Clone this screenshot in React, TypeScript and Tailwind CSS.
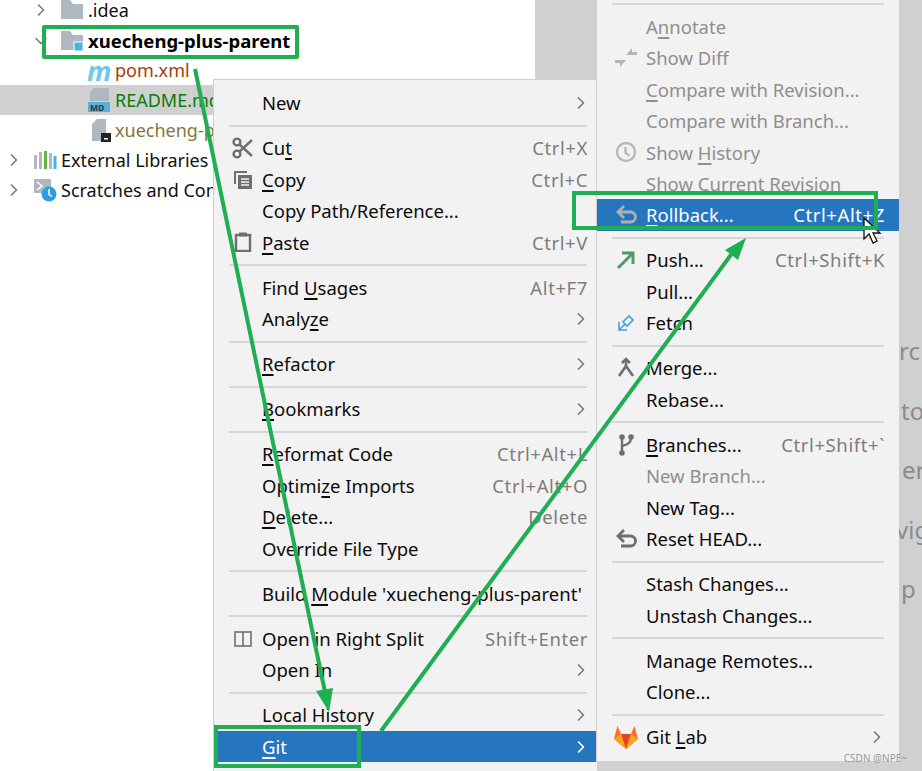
import { ChevronRight, ChevronDown } from 'lucide-react'
import type { ReactNode } from 'react'

const font = { fontFamily: '"Noto Sans", sans-serif' }

function U({ children }: { children: ReactNode }) {
  return <span className="underline decoration-2 underline-offset-[3px]">{children}</span>
}

function Sep({ sub }: { sub?: boolean }) {
  return (
    <div className={`h-[13.75px] flex items-center pl-[15px] ${sub ? 'pr-[15px]' : 'pr-[10px]'}`}>
      <div className="h-[2px] w-full bg-[#d6d6d6]" />
    </div>
  )
}

interface ItemProps {
  label: ReactNode
  icon?: ReactNode
  shortcut?: string
  arrow?: boolean
  disabled?: boolean
  active?: boolean
  sub?: boolean
}

function Item({ label, icon, shortcut, arrow, disabled, active, sub }: ItemProps) {
  const color = active ? 'text-white' : disabled ? 'text-[#8f8f8f]' : 'text-[#0c0c0c]'
  return (
    <div className={`h-[31.4px] flex items-center whitespace-nowrap ${active ? 'bg-[#2675bf]' : ''} ${color}`}>
      <div className={`shrink-0 pl-[9px] flex items-center justify-center ${sub ? 'w-[49px]' : 'w-[48px]'}`}>{icon}</div>
      <div>{label}</div>
      <div className="flex-1" />
      {shortcut && (
        <div className={`tracking-[0.6px] ${sub ? 'pr-[14px]' : 'pr-[9px]'} ${active ? 'text-white' : 'text-[#7d7d7d]'}`}>
          {shortcut}
        </div>
      )}
      {arrow && (
        <ChevronRight
          size={20}
          strokeWidth={2}
          className={`${sub ? 'mr-[12px]' : 'mr-[6px]'} ${active ? 'text-white' : 'text-[#7b7b7b]'}`}
        />
      )}
    </div>
  )
}

function FolderIcon({ badge }: { badge?: boolean }) {
  return (
    <svg width="24" height="24" viewBox="0 0 24 24">
      <path d="M1 2h9l3 4h10v15H1z" fill="#afb8bf" />
      {badge && <rect x="14" y="13" width="9" height="9" fill="#40b6e0" stroke="#fff" strokeWidth="1" />}
    </svg>
  )
}

function ScissorsIcon() {
  return (
    <svg width="22" height="22" viewBox="0 0 22 22" fill="none" stroke="#6e6e6e" strokeWidth="2.4">
      <circle cx="5" cy="5" r="3.4" />
      <circle cx="5" cy="17" r="3.4" />
      <path d="M7.5 7.5L20 19M7.5 14.5L20 3" />
    </svg>
  )
}

function CopyIcon() {
  return (
    <svg width="20" height="20" viewBox="0 0 20 20">
      <path d="M1 1h13v2H3v11H1z" fill="#6e6e6e" />
      <rect x="5" y="5" width="14" height="14" fill="#6e6e6e" />
      <path d="M8 9h8M8 12h8M8 15h8" stroke="#f2f2f2" strokeWidth="1.3" />
    </svg>
  )
}

function PasteIcon() {
  return (
    <svg width="18" height="20" viewBox="0 0 18 20" fill="none">
      <rect x="2" y="3" width="14" height="16" stroke="#6e6e6e" strokeWidth="2.4" />
      <rect x="5" y="0.5" width="8" height="4" fill="#6e6e6e" />
    </svg>
  )
}

function SplitIcon() {
  return (
    <svg width="18" height="18" viewBox="0 0 18 18" fill="none" stroke="#6e6e6e" strokeWidth="1.6">
      <rect x="1" y="2" width="16" height="14" />
      <path d="M9 2v14" />
    </svg>
  )
}

function DiffIcon() {
  return (
    <svg width="22" height="22" viewBox="0 0 22 22" fill="#b5b5b5">
      <path d="M11 8L17 1v4h5v3z" />
      <path d="M11 13L5 20v-4H0v-3z" />
    </svg>
  )
}

function ClockIcon() {
  return (
    <svg width="22" height="22" viewBox="0 0 22 22" fill="none" stroke="#b8b8b8" strokeWidth="2.4">
      <circle cx="11" cy="11" r="9" />
      <path d="M10.5 6v6l4 2.5" />
    </svg>
  )
}

function UndoIcon({ color }: { color: string }) {
  return (
    <svg width="21" height="20" viewBox="0 0 21 20" fill="none" stroke={color} strokeWidth="2.800">
      <path d="M2 7h12.500a5 5 0 0 1 0 10H5" />
      <path d="M8 1L2 7l6 6" />
    </svg>
  )
}

function PushIcon() {
  return (
    <svg width="20" height="20" viewBox="0 0 20 20" fill="none" stroke="#4e9a6a" strokeWidth="3">
      <path d="M2 18L16 4" />
      <path d="M6 3h11v11" />
    </svg>
  )
}

function FetchIcon() {
  return (
    <svg width="18" height="18" viewBox="0 0 18 18" fill="none" stroke="#3f9fe0" strokeWidth="1.6">
      <path d="M2 8v8h8" />
      <path d="M2.5 15.5L8 10l-2-2 6-6 4 4-6 6-2-2" />
    </svg>
  )
}

function MergeIcon() {
  return (
    <svg width="18" height="22" viewBox="0 0 18 22" fill="none" stroke="#6e6e6e" strokeWidth="2.600">
      <path d="M9 3v6L2 19" />
      <path d="M9 9l7 10" />
      <path d="M5 6l4-4 4 4" />
    </svg>
  )
}

function BranchIcon() {
  return (
    <svg width="16" height="22" viewBox="0 0 16 22" fill="none" stroke="#6e6e6e" strokeWidth="2.400">
      <path d="M4 3v16" />
      <path d="M13 4c0 5-3 6-9 8" />
      <circle cx="4" cy="3" r="1.600" fill="#6e6e6e" />
      <circle cx="4" cy="19" r="1.600" fill="#6e6e6e" />
      <circle cx="13" cy="3" r="1.600" fill="#6e6e6e" />
    </svg>
  )
}

function GitLabIcon() {
  return (
    <svg width="26" height="24" viewBox="0 0 26 24">
      <path d="M1 14L4.500 1 8 9h10l3.500-8L25 14l-12 10z" fill="#fc6d26" />
      <path d="M13 24L8 9h10z" fill="#e24329" />
      <path d="M1 14l12 10L8 9zM25 14L13 24l5-15z" fill="#fca326" />
    </svg>
  )
}

export default function App() {
  return (
    <div className="relative w-[922px] h-[771px] overflow-hidden bg-white text-[18.5px]" style={font}>
      {/* project tree */}
      <div className="-mt-[5px] w-[535px] text-[#111] text-[18px]">
        <div className="h-[30px] flex items-center pl-[31px]">
          <ChevronRight size={20} className="text-[#7b7b7b]" />
          <div className="ml-[9px] w-[28px]"><FolderIcon /></div>
          <span>.idea</span>
        </div>
        <div className="h-[30px] flex items-center pl-[31px] mt-[1px]">
          <ChevronDown size={20} className="text-[#7b7b7b]" />
          <div className="ml-[9px] w-[28px]"><FolderIcon badge /></div>
          <span className="font-bold text-black text-[18.5px]">xuecheng-plus-parent</span>
        </div>
        <div className="h-[30px] -mt-[1px] flex items-center pl-[87px]">
          <span className="w-[28px] text-[#6fc7ea] font-bold italic text-[27px] leading-none">m</span>
          <span className="text-[#a33e0c]">pom.xml</span>
        </div>
        <div className="h-[30px] flex items-center pl-[87px] bg-[#d0d0d0]">
          <svg width="24" height="26" viewBox="0 0 24 26" className="mr-[4px]">
            <path d="M7 1h15v13H3V5z" fill="#afb8bf" />
            <path d="M1 15h22v10H1z" fill="#5fb0d8" />
            <text x="3" y="23.500" fontSize="8.500" fontWeight="700" fill="#1d3a4a">MD</text>
          </svg>
          <span className="text-[#0a7a0a]">README.md</span>
        </div>
        <div className="h-[30px] flex items-center pl-[91px]">
          <svg width="20" height="24" viewBox="0 0 20 24" className="mr-[4px]">
            <path d="M6 1h9v16h-4v6H1V6z" fill="#afb8bf" />
            <rect x="10" y="15" width="10" height="9" fill="#222" />
            <rect x="13" y="20" width="4" height="1.500" fill="#fff" />
          </svg>
          <span className="text-[#82783c]">xuecheng-plus-parent.iml</span>
        </div>
        <div className="h-[30px] flex items-center pl-[4px]">
          <ChevronRight size={20} className="text-[#7b7b7b]" />
          <svg width="24" height="20" viewBox="0 0 24 20" className="ml-[9px] mr-[4px]">
            <rect x="1" y="5" width="3" height="14" fill="#afb8bf" />
            <rect x="6" y="2" width="3" height="17" fill="#afb8bf" />
            <rect x="11" y="1" width="3" height="18" fill="#62b543" />
            <rect x="16" y="3" width="3" height="16" fill="#afb8bf" />
            <rect x="20.500" y="6" width="3" height="13" fill="#40b6e0" />
          </svg>
          <span>External Libraries</span>
        </div>
        <div className="h-[30px] flex items-center pl-[4px]">
          <ChevronRight size={20} className="text-[#7b7b7b]" />
          <svg width="24" height="24" viewBox="0 0 24 24" className="ml-[9px] mr-[4px]">
            <rect x="1" y="1" width="17" height="14" fill="#afb8bf" />
            <path d="M4 4l5 4-5 4" fill="none" stroke="#fff" strokeWidth="1.600" />
            <circle cx="16" cy="16" r="7.500" fill="#2f9ee0" />
            <path d="M16 11v5.500l3 2" fill="none" stroke="#fff" strokeWidth="1.500" />
          </svg>
          <span>Scratches and Consoles</span>
        </div>
      </div>

      {/* dimmed window behind the popups */}
      <div className="absolute inset-y-0 left-[535px] right-0 bg-[#d0d0d0]" />
      <div className="absolute left-[888px] right-0 top-[321px] flex flex-col text-[24px] text-[#8b8b8b] leading-[59.500px] whitespace-nowrap">
        <div className="pl-[11px]">rc</div>
        <div className="pl-[13px]">to</div>
        <div className="pl-[14px]">er</div>
        <div className="pl-[8px]">vig</div>
        <div className="pl-[13px]">p</div>
      </div>

      {/* project context menu */}
      <div className="absolute left-[213px] top-[79px] bottom-0 w-[384px] bg-[#f2f2f2] border-l border-t border-[#d0d0d0] pt-[7.4px]">
        <Item label="New" arrow />
        <Sep />
        <Item icon={<ScissorsIcon />} label={<>Cu<U>t</U></>} shortcut="Ctrl+X" />
        <Item icon={<CopyIcon />} label={<><U>C</U>opy</>} shortcut="Ctrl+C" />
        <Item label="Copy Path/Reference..." />
        <Item icon={<PasteIcon />} label={<><U>P</U>aste</>} shortcut="Ctrl+V" />
        <Sep />
        <Item label={<>Find <U>U</U>sages</>} shortcut="Alt+F7" />
        <Item label={<>Analy<U>z</U>e</>} arrow />
        <Sep />
        <Item label={<><U>R</U>efactor</>} arrow />
        <Sep />
        <Item label={<><U>B</U>ookmarks</>} arrow />
        <Sep />
        <Item label={<><U>R</U>eformat Code</>} shortcut="Ctrl+Alt+L" />
        <Item label={<>Optimi<U>z</U>e Imports</>} shortcut="Ctrl+Alt+O" />
        <Item label={<><U>D</U>elete...</>} shortcut="Delete" />
        <Item label="Override File Type" />
        <Sep />
        <Item label={<>Build <U>M</U>odule 'xuecheng-plus-parent'</>} />
        <Sep />
        <Item icon={<SplitIcon />} label="Open in Right Split" shortcut="Shift+Enter" />
        <Item label="Open In" arrow />
        <Sep />
        <Item label={<>Local <U>H</U>istory</>} arrow />
        <Item label={<><U>G</U>it</>} arrow active />
      </div>

      {/* git submenu */}
      <div className="absolute left-[596px] top-[-10px] w-[303px] h-[772px] bg-[#f2f2f2] border-l border-b border-[#d0d0d0] pt-[7.4px]">
        <Sep sub />
        <Item sub label={<>A<U>n</U>notate</>} disabled />
        <Item sub icon={<DiffIcon />} label="Show Diff" disabled />
        <Item sub label={<><U>C</U>ompare with Revision...</>} disabled />
        <Item sub label="Compare with Branch..." disabled />
        <Item sub icon={<ClockIcon />} label={<>Show <U>H</U>istory</>} disabled />
        <Item sub label="Show Current Revision" disabled />
        <Item sub icon={<UndoIcon color="#b0b0b0" />} label={<><U>R</U>ollback...</>} shortcut="Ctrl+Alt+Z" active />
        <Sep sub />
        <Item sub icon={<PushIcon />} label="Push..." shortcut="Ctrl+Shift+K" />
        <Item sub label="Pull..." />
        <Item sub icon={<FetchIcon />} label="Fetch" />
        <Sep sub />
        <Item sub icon={<MergeIcon />} label="Merge..." />
        <Item sub label="Rebase..." />
        <Sep sub />
        <Item sub icon={<BranchIcon />} label={<><U>B</U>ranches...</>} shortcut="Ctrl+Shift+`" />
        <Item sub label="New Branch..." disabled />
        <Item sub label="New Tag..." />
        <Item sub icon={<UndoIcon color="#6e6e6e" />} label="Reset HEAD..." />
        <Sep sub />
        <Item sub label="Stash Changes..." />
        <Item sub label="Unstash Changes..." />
        <Sep sub />
        <Item sub label="Manage Remotes..." />
        <Item sub label="Clone..." />
        <Sep sub />
        <Item sub icon={<GitLabIcon />} label={<>Git <U>L</U>ab</>} arrow />
      </div>

      {/* mouse cursor */}
      <svg className="absolute left-[862px] top-[216px]" width="22" height="30" viewBox="0 0 22 30">
        <path d="M2 2v21l5-5 4 9 4-2-4-8h7z" fill="#fff" stroke="#111" strokeWidth="1.300" />
      </svg>

      {/* annotations */}
      <div className="absolute left-[42px] top-[25px] w-[257px] h-[34px] border-[4px] border-[#1fae51] rounded-[2px]" />
      <div className="absolute left-[572px] top-[191px] w-[306px] h-[39px] border-[4px] border-[#1fae51]" />
      <div className="absolute left-[214px] top-[725px] w-[147px] h-[43px] border-[4px] border-[#1fae51]" />
      <svg className="absolute inset-0" width="922" height="771" viewBox="0 0 922 771" fill="none">
        <path d="M195 69L325 692" stroke="#1fae51" strokeWidth="4" />
        <path d="M316 691L333 688L329 712z" fill="#1fae51" />
        <path d="M381 731L733 252" stroke="#1fae51" strokeWidth="4" />
        <path d="M725 250L738 260L746 238z" fill="#1fae51" />
      </svg>

      <div className="absolute right-[15px] bottom-[8px] text-[10px] text-[#9a9a9a] leading-none">CSDN @NPE~</div>
    </div>
  )
}
